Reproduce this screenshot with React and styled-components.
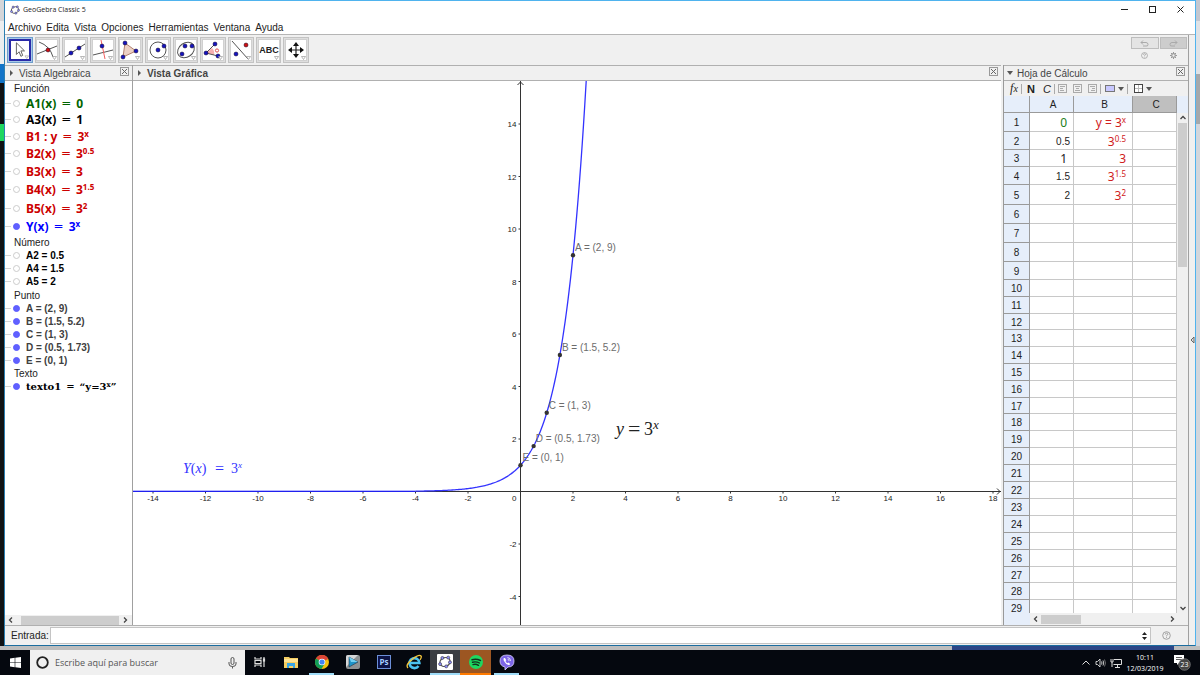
import React from "react";
import styled, { createGlobalStyle } from "styled-components";

const GlobalStyle = createGlobalStyle`
  * { box-sizing: border-box; }
  body {
    margin: 0;
    font-family: "Liberation Sans", Arial, sans-serif;
    font-size: 10px;
    color: #222;
  }
  button, input {
    font: inherit;
    color: inherit;
    margin: 0;
    padding: 0;
    border: 0;
    background: none;
  }
  svg { display: block; }
`;

// * Desktop

const Desktop = styled.div`
  display: flex;
  flex-direction: column;
  height: 100vh;
  overflow: hidden;
  background: #101214;
`;

const Stage = styled.div`
  flex: 1;
  min-height: 0;
  display: flex;
`;

const Edge = styled.div`
  width: 4px;
  flex: none;
  display: flex;
  flex-direction: column;
  background: ${props => props.color};
`;

const EdgePart = styled.div`
  height: ${props => props.size}px;
  background: ${props => props.color};
`;

const Window = styled.section`
  flex: 1;
  min-width: 0;
  display: flex;
  flex-direction: column;
  background: #f0f0f0;
  border: 1px solid #4fb3ee;
  border-left-color: #2b7fb2;
  border-bottom-color: #1b6d9f;
`;

const Shadow = styled.div`
  height: 4px;
  flex: none;
  display: flex;
  background: #bdbdbd;
`;

const ShadowBlue = styled.div`
  width: 222px;
  margin-left: auto;
  margin-right: 26px;
  background: #2c4687;
`;

const TitleBar = styled.header`
  height: 17px;
  flex: none;
  display: flex;
  align-items: center;
  gap: 3px;
  padding-left: 5px;
  background: white;
  font-family: "Open Sans", "Noto Sans", sans-serif;
  font-size: 7px;
`;

const WindowButtons = styled.div`
  margin-left: auto;
  padding-right: 1px;
  display: flex;
`;

const WindowButton = styled.button`
  width: 28px;
  height: 16px;
  display: grid;
  place-items: center;
`;

const MenuBar = styled.nav`
  height: 16px;
  flex: none;
  display: flex;
  align-items: center;
  gap: 5px;
  padding: 2px 0 0 3px;
  background: white;
`;

const WindowBody = styled.div`
  flex: 1;
  min-height: 0;
  display: flex;
  border-top: 1px solid #b5b5b5;
`;

const Main = styled.div`
  flex: 1;
  min-width: 0;
  display: flex;
  flex-direction: column;
`;

const SideStrip = styled.button`
  width: 7px;
  flex: none;
  display: flex;
  align-items: center;
  border-left: 1px solid #a0a0a0;
  background: #f0f0f0;
`;

// * Toolbar

const ToolBar = styled.div`
  height: 30px;
  flex: none;
  display: flex;
  justify-content: space-between;
  padding: 2px 1px 0 2px;
`;

const Tools = styled.div`
  width: 302px;
  height: 26px;
  display: flex;
  gap: 2px;
`;

const Tool = styled.button`
  flex: 1;
  display: grid;
  place-items: center;
  border: 1px solid ${props => (props.selected ? "#6d9dcc" : "#c3c3c3")};
  background: ${props => (props.selected ? "#a9c9e8" : "#dedede")};
`;

const ToolFace = styled.span`
  width: 22px;
  height: 22px;
  display: grid;
  place-items: center;
  background: white;
  border: ${props => (props.selected ? "2px solid #2a2aa8" : "1px solid #d0d0d0")};
`;

const Actions = styled.div`
  width: 56px;
  display: grid;
  grid-template-columns: 1fr 1fr;
  grid-template-rows: 12px 13px;
  column-gap: 1px;
`;

const Action = styled.button`
  display: grid;
  place-items: center;
  border: ${props => (props.boxed ? "1px solid #bdbdbd" : "0")};
  background: ${props => (props.boxed ? props.dark ? "#cdcdcd" : "#e4e4e4" : "none")};
`;

// * Panels

const Panels = styled.div`
  flex: 1;
  min-height: 0;
  display: flex;
`;

const Panel = styled.section`
  width: ${props => (props.width ? props.width + "px" : "auto")};
  flex: ${props => (props.width ? "none" : "1")};
  min-width: 0;
  display: flex;
  flex-direction: column;
  border-right: ${props => props.line || 0}px solid #a0a0a0;
  border-left: ${props => props.leftLine || 0}px solid #999;
  margin-right: ${props => props.gap || 0}px;
`;

const PanelHead = styled.div`
  height: 16px;
  flex: none;
  display: flex;
  align-items: center;
  gap: 4px;
  padding: 0 3px 0 ${props => props.inset || 5}px;
  border-top: 1px solid #b0b0b0;
  border-bottom: 1px solid #b0b0b0;
  color: #444;
`;

const PanelTitle = styled.h2`
  flex: 1;
  margin: 0;
  padding-top: 2px;
  font-size: 10px;
  line-height: 12px;
  font-weight: ${props => (props.strong ? "bold" : "normal")};
`;

const CloseButton = styled.button`
  width: 9px;
  height: 9px;
  margin-bottom: 3px;
`;

const Tree = styled.div`
  flex: 1;
  min-height: 0;
  overflow: hidden;
  background: white;
`;

const TreeGroup = styled.div`
  height: ${props => props.height}px;
  display: flex;
  align-items: center;
  padding-left: 9px;
`;

const TreeRow = styled.div`
  height: ${props => props.height}px;
  display: flex;
  align-items: center;
  font-weight: bold;
  color: ${props => props.color};
`;

const Branch = styled.span`
  width: 6px;
  margin-right: 2px;
  border-top: 1px solid #d4d4d4;
`;

const Marble = styled.button`
  width: 7px;
  height: 7px;
  margin-right: 6px;
  border-radius: 50%;
  border: 1px solid ${props => (props.on ? "#5c5cff" : "#ccc")};
  background: ${props => (props.on ? "#6060ff" : "white")};
`;

const Formula = styled.span`
  display: flex;
  gap: 5px;
  font-family: ${props =>
    props.serif ? `"DejaVu Serif", serif` : `"Noto Sans", sans-serif`};
  font-size: ${props => (props.serif ? 10 : 12)}px;
  line-height: 13px;
`;

const Equals = styled.span`
  font-family: "DejaVu Sans", sans-serif;
  font-weight: normal;
`;

const Sup = styled.sup`
  font-size: 8px;
  line-height: 0;
  vertical-align: 4px;
`;

const SmallSup = styled(Sup)`
  font-size: 7px;
  vertical-align: 3px;
`;

const ScrollRow = styled.div`
  height: ${props => props.height}px;
  flex: 1;
  display: flex;
  align-items: center;
  background: #f0f0f0;
`;

const ScrollFoot = styled.div`
  height: 10px;
  flex: none;
  display: flex;
  padding-right: 1px;
  background: #f0f0f0;
`;

const ArrowButton = styled.button`
  width: ${props => props.size}px;
  height: 10px;
  flex: none;
  display: grid;
  place-items: center;
`;

const Track = styled.div`
  flex: 1;
  height: 9px;
`;

const Thumb = styled.div`
  width: ${props => props.length};
  height: 9px;
  background: #cdcdcd;
`;

const Plot = styled.svg`
  flex: 1;
  width: 100%;
  min-height: 0;
  background: white;
  font-family: "Liberation Sans", Arial, sans-serif;
`;

// * Spreadsheet

const StyleBar = styled.div`
  height: 15px;
  flex: none;
  display: flex;
  align-items: center;
  padding-left: 3px;
`;

const StyleButton = styled.button`
  width: ${props => props.width}px;
  height: 14px;
  display: flex;
  align-items: center;
  justify-content: center;
  gap: ${props => (props.serif ? 0 : 3)}px;
  font-size: ${props => (props.serif ? 12 : 11)}px;
  font-weight: ${props => (props.strong ? "bold" : "normal")};
  font-style: ${props => (props.slanted ? "italic" : "normal")};
  font-family: ${props => (props.serif ? `"Liberation Serif", serif` : "inherit")};
`;

const Divider = styled.span`
  width: 1px;
  height: 10px;
  background: #aaa;
`;

const SheetArea = styled.div`
  flex: 1;
  min-height: 0;
  display: flex;
`;

const SheetView = styled.div`
  flex: 1;
  min-width: 0;
  overflow: hidden;
  background: white;
`;

const Sheet = styled.table`
  width: 100%;
  table-layout: fixed;
  border-collapse: separate;
  border-spacing: 0;
`;

const HeadCell = styled.th`
  height: ${props => props.height}px;
  width: ${props => (props.width ? props.width + "px" : "auto")};
  padding: 2px 0 0 ${props => (props.letter ? 3 : 0)}px;
  border-right: 1px solid #9a9a9a;
  border-bottom: 1px solid #9a9a9a;
  background: ${props => (props.current ? "#bfbfbf" : "#e6eefa")};
  font-size: 10px;
  font-weight: normal;
  line-height: 12px;
`;

const Cell = styled.td`
  padding: 2px ${props => (props.math ? 6 : 3)}px 0 0;
  border-right: 1px solid #c8c8c8;
  border-bottom: 1px solid #c8c8c8;
  text-align: right;
  line-height: 12px;
  white-space: nowrap;
  font-size: ${props => (props.math ? 12 : 10)}px;
  font-family: ${props => (props.math ? `"Noto Sans", sans-serif` : "inherit")};
  color: ${props => props.color || "#222"};
`;

const SheetScroll = styled.div`
  width: 11px;
  flex: none;
  display: flex;
  flex-direction: column;
  align-items: center;
`;

const ScrollHead = styled.div`
  width: 100%;
  height: 17px;
  background: #e6eefa;
`;

const VerticalTrack = styled.div`
  flex: 1;
  width: 9px;
`;

const VerticalThumb = styled.div`
  height: 30%;
  background: #cdcdcd;
`;

const SheetFoot = styled.div`
  height: 12px;
  flex: none;
  display: flex;
  padding-right: 11px;
  background: #f0f0f0;
`;

const SheetCorner = styled.div`
  width: 26px;
  background: #e6eefa;
`;

// * Input bar

const InputBar = styled.form`
  height: 20px;
  flex: none;
  display: flex;
  align-items: center;
  gap: 1px;
  padding-left: 6px;
  border-top: 1px solid #b0b0b0;
`;

const InputFrame = styled.div`
  flex: 1;
  height: 17px;
  display: flex;
  align-items: center;
  padding-right: 3px;
  border: 1px solid #c4c4c4;
  background: white;
`;

const TextInput = styled.input`
  flex: 1;
  min-width: 0;
  height: 15px;
  padding: 0 3px;
  outline: none;
`;

const HelpButton = styled.button`
  width: 36px;
  padding-right: 8px;
  display: grid;
  place-items: center;
`;

// * Taskbar

const TaskBar = styled.footer`
  height: 25px;
  flex: none;
  display: flex;
  background: #05080f;
  color: white;
  font-family: "Open Sans", "Noto Sans", sans-serif;
`;

const StartButton = styled.button`
  width: 30px;
  display: grid;
  place-items: center;
`;

const SearchBox = styled.label`
  width: 215px;
  display: flex;
  align-items: center;
  gap: 6px;
  padding: 0 8px 0 6px;
  background: #f0f0f0;
`;

const SearchInput = styled.input`
  flex: 1;
  min-width: 0;
  color: #444;
  font-size: 9px;
  font-family: "Open Sans", "Noto Sans", sans-serif;
  &::placeholder { color: #555; opacity: 1; }
`;

const Apps = styled.div`
  width: 277px;
  display: flex;
`;

const AppButton = styled.button`
  flex: 1;
  display: flex;
  flex-direction: column;
  align-items: center;
  justify-content: space-between;
  padding-top: 4px;
  background: ${props => props.tint || "none"};
`;

const AppLine = styled.span`
  width: ${props => (props.wide ? "100%" : "25px")};
  height: 2px;
  background: ${props => props.color || "transparent"};
`;

const Tray = styled.div`
  margin-left: auto;
  display: flex;
  align-items: center;
  padding-right: 9px;
`;

const TrayButton = styled.button`
  width: 15px;
  display: grid;
  place-items: center;
`;

const Clock = styled.time`
  width: 44px;
  text-align: center;
  font-size: 7px;
  line-height: 11px;
`;

const Notices = styled.button`
  width: 24px;
  display: grid;
  place-items: center end;
`;

const Close = ({ name }) => (
  <CloseButton aria-label={name}>
    <svg width="9" height="9" fill="none" stroke="#999">
      <rect x="0.5" y="0.5" width="8" height="8" />
      <path d="M2 2l5 5M7 2l-5 5" stroke="#666" />
    </svg>
  </CloseButton>
);

const Triangle = ({ down }) => (
  <svg width="6" height="6" fill="#555">
    <path d={down ? "M0 1h6l-3 4z" : "M1 0v6l3-3z"} />
  </svg>
);

const chevrons = {
  left: "M4 0.5L1.5 3 4 5.5",
  right: "M2 0.5L4.5 3 2 5.5",
  up: "M0.5 4L3 1.5 5.5 4",
  down: "M0.5 2L3 4.5 5.5 2"
};

const Arrow = ({ to, size = 16 }) => (
  <ArrowButton size={size} aria-label={to}>
    <svg width="6" height="6" fill="none" stroke="#444" strokeWidth="1.3">
      <path d={chevrons[to]} />
    </svg>
  </ArrowButton>
);

const GeoLogo = ({ size }) => (
  <svg width={size} height={size} viewBox="0 0 16 16">
    <ellipse cx="8" cy="8" rx="6" ry="5" transform="rotate(-20 8 8)" fill="none" stroke="#555" strokeWidth="1.3" />
    <g fill="#8f8fff" stroke="#445" strokeWidth="0.8">
      <circle cx="5" cy="3.4" r="1.7" />
      <circle cx="11.7" cy="3" r="1.7" />
      <circle cx="13.7" cy="8.4" r="1.7" />
      <circle cx="9.4" cy="13" r="1.7" />
      <circle cx="2.4" cy="10.4" r="1.7" />
    </g>
  </svg>
);

const Dot = ({ x, y, red }) => (
  <circle cx={x} cy={y} r="2" fill={red ? "#d01010" : "#1414c0"} stroke="#102" strokeWidth="0.5" />
);

const tools = [
  {
    name: "Elige y mueve",
    art: <path d="M6 2v13l3-3 2 5 2-1-2-5h4z" fill="white" stroke="#555" />
  },
  {
    name: "Punto",
    art: (
      <>
        <path d="M2 2q11 4 14 15M0 14L20 6" stroke="#555" fill="none" />
        <Dot x="11" y="10" red />
      </>
    )
  },
  {
    name: "Recta",
    art: (
      <>
        <path d="M0 17L20 4" stroke="#555" />
        <Dot x="6" y="13" />
        <Dot x="14" y="8" />
      </>
    )
  },
  {
    name: "Perpendicular",
    art: (
      <>
        <path d="M0 15l20-5" stroke="#555" />
        <path d="M8 0l4 19" stroke="#f06060" />
        <Dot x="9" y="6" />
      </>
    )
  },
  {
    name: "Polígono",
    art: (
      <>
        <path d="M5 3l11 8L3 17z" fill="#ecd0c4" stroke="#b08070" />
        <Dot x="5" y="3" />
        <Dot x="16" y="11" />
        <Dot x="3" y="17" />
      </>
    )
  },
  {
    name: "Circunferencia",
    art: (
      <>
        <circle cx="10" cy="10" r="8" fill="none" stroke="#555" />
        <Dot x="10" y="10" />
        <Dot x="16" y="6" />
      </>
    )
  },
  {
    name: "Elipse",
    art: (
      <>
        <ellipse cx="10" cy="10" rx="9" ry="7" transform="rotate(-35 10 10)" fill="none" stroke="#555" />
        <Dot x="9" y="6" />
        <Dot x="16" y="6" />
        <Dot x="6" y="14" />
      </>
    )
  },
  {
    name: "Ángulo",
    art: (
      <>
        <path d="M3 13L9 8q3 3 2 7z" fill="#f7b0b0" />
        <path d="M3 13L12 4M3 13l12 3" stroke="#555" />
        <circle cx="14" cy="10.5" r="1.6" fill="none" stroke="#e05050" />
        <Dot x="3" y="13" />
        <Dot x="12" y="4" />
        <Dot x="15" y="16" />
      </>
    )
  },
  {
    name: "Simetría",
    art: (
      <>
        <path d="M1 1l16 18" stroke="#555" />
        <Dot x="15" y="5" red />
        <Dot x="5" y="14" />
      </>
    )
  },
  {
    name: "Texto",
    art: (
      <text x="10" y="13" textAnchor="middle" fontSize="9" fontWeight="bold" fill="#222">
        ABC
      </text>
    )
  },
  {
    name: "Desplaza vista",
    art: (
      <>
        <path d="M10 4v12M4 10h12" stroke="#222" strokeWidth="1.2" />
        <path d="M10 2l3 4H7zM10 18l3-4H7zM2 10l4-3v6zM18 10l-4-3v6z" fill="#111" />
      </>
    )
  }
];

const menus = ["Archivo", "Edita", "Vista", "Opciones", "Herramientas", "Ventana", "Ayuda"];

const green = "#006400";
const red = "#cc0000";
const blue = "#0000ff";

const algebra = [
  { group: "Función", height: 15 },
  { left: "A1(x)", right: "0", color: green, height: 15 },
  { left: "A3(x)", right: "1", color: "#000", height: 17 },
  { left: "B1 : y", right: "3", sup: "x", color: red, height: 16 },
  { left: "B2(x)", right: "3", sup: "0.5", color: red, height: 19 },
  { left: "B3(x)", right: "3", color: red, height: 17 },
  { left: "B4(x)", right: "3", sup: "1.5", color: red, height: 19 },
  { left: "B5(x)", right: "3", sup: "2", color: red, height: 18 },
  { left: "Y(x)", right: "3", sup: "x", color: blue, height: 18, on: true },
  { group: "Número", height: 14 },
  { text: "A2 = 0.5", color: "#000", height: 13 },
  { text: "A4 = 1.5", color: "#000", height: 13 },
  { text: "A5 = 2", color: "#000", height: 13 },
  { group: "Punto", height: 14 },
  { text: "A = (2, 9)", color: "#404040", height: 13, on: true },
  { text: "B = (1.5, 5.2)", color: "#404040", height: 13, on: true },
  { text: "C = (1, 3)", color: "#404040", height: 13, on: true },
  { text: "D = (0.5, 1.73)", color: "#404040", height: 13, on: true },
  { text: "E = (0, 1)", color: "#404040", height: 13, on: true },
  { group: "Texto", height: 13 },
  { left: "texto1", right: "“y=3", smallSup: "x", end: "”", color: "#000", height: 13, on: true, serif: true }
];

const AlgebraRow = ({ item }) => {
  if (item.group) {
    return <TreeGroup height={item.height}>{item.group}</TreeGroup>;
  }
  return (
    <TreeRow height={item.height} color={item.color}>
      <Branch />
      <Marble on={item.on} aria-label={item.text || item.left} />
      {item.text || (
        <Formula serif={item.serif}>
          <span>{item.left}</span>
          <Equals>=</Equals>
          <span>
            {item.right}
            {item.sup && <Sup>{item.sup}</Sup>}
            {item.smallSup && <SmallSup>{item.smallSup}</SmallSup>}
            {item.end}
          </span>
        </Formula>
      )}
    </TreeRow>
  );
};

// * Graph: origin and unit length in pixels
const OX = 387.5;
const OY = 410.5;
const UX = 26.25;
const UY = 26.25;

const px = x => OX + x * UX;
const py = y => OY - y * UY;

// * from x = -4 on; left of that the curve lies on the axis
const curve = Array.from({ length: 135 }, (_, i) => {
  const x = -4 + i * 0.05;
  return `${px(x).toFixed(2)} ${py(3 ** x).toFixed(2)}`;
}).join("L");

const xTicks = [-14, -12, -10, -8, -6, -4, -2, 2, 4, 6, 8, 10, 12, 14, 16, 18];
const yTicks = [-4, -2, 2, 4, 6, 8, 10, 12, 14];

const points = [
  { x: 2, y: 9, label: "A = (2, 9)" },
  { x: 1.5, y: 5.2, label: "B = (1.5, 5.2)" },
  { x: 1, y: 3, label: "C = (1, 3)" },
  { x: 0.5, y: 1.73, label: "D = (0.5, 1.73)" },
  { x: 0, y: 1, label: "E = (0, 1)" }
];

const Graph = () => (
  <Plot role="img" aria-label="Vista Gráfica">
    <g stroke="#333" strokeWidth="1">
      <line x1={px(-4)} x2="100%" y1={OY} y2={OY} />
      <line x1={OX} x2={OX} y1="0" y2="100%" />
      {xTicks.map(t => (
        <line key={t} x1={px(t)} x2={px(t)} y1={OY} y2={OY + 2} />
      ))}
      {yTicks.map(t => (
        <line key={t} x1={OX - 2} x2={OX} y1={py(t)} y2={py(t)} />
      ))}
      <path d={`M${OX - 3} 4L${OX} 1l3 3M864 ${OY - 3}l3 3l-3 3`} fill="none" />
    </g>
    <g fontSize="8" fill="#222">
      {xTicks.map(t => (
        <text key={t} x={px(t)} y={OY + 9} textAnchor="middle">{t}</text>
      ))}
      {yTicks.map(t => (
        <text key={t} x={OX - 4} y={py(t) + 3} textAnchor="end">{t}</text>
      ))}
      <text x={OX - 4} y={OY + 9} textAnchor="end">0</text>
    </g>
    <rect x="0" y={OY - 0.5} width={px(-4)} height="1" fill="#2020ee" />
    <rect x="0" y={OY - 1.5} width={px(-4)} height="1" fill="#b8b8ff" />
    <path d={`M${curve}`} fill="none" stroke="#3333ff" strokeWidth="1.3" />
    {points.map(p => (
      <g key={p.label}>
        <text x={px(p.x) + 2} y={py(p.y) - 4} fontSize="10" fill="#6c6c6c">{p.label}</text>
        <circle cx={px(p.x)} cy={py(p.y)} r="2.2" fill="#333" />
      </g>
    ))}
    <g fontFamily="Liberation Serif, serif" fill="#222" fontSize="18">
      <text x="483" y="354" fontStyle="italic">y</text>
      <text x="495" y="355" fontSize="22">=</text>
      <text x="511" y="354">3</text>
      <text x="520" y="348" fontSize="13" fontStyle="italic">x</text>
    </g>
    <g fontFamily="Liberation Serif, serif" fill="#3333ff" fontSize="14">
      <text x="50" y="392"><tspan fontStyle="italic">Y</tspan>(<tspan fontStyle="italic">x</tspan>)</text>
      <text x="82" y="393" fontSize="16">=</text>
      <text x="98" y="392">3</text>
      <text x="105" y="387" fontSize="9" fontStyle="italic">x</text>
    </g>
  </Plot>
);

const cells = {
  1: [{ v: "0", color: "#208020", math: true }, { v: "y = 3", sup: "x" }],
  2: [{ v: "0.5" }, { v: "3", sup: "0.5" }],
  3: [{ v: "1", math: true }, { v: "3" }],
  4: [{ v: "1.5" }, { v: "3", sup: "1.5" }],
  5: [{ v: "2" }, { v: "3", sup: "2" }]
};

const rowHeights = [
  19, 18, 17, 18, 20, 19, 19, 19, 18,
  17, 17, 16, 17, 17, 17, 17, 16, 17, 17, 17, 17, 17, 17, 17, 17, 17, 16, 17, 17
];

const SheetTable = () => (
  <Sheet>
    <thead>
      <tr>
        <HeadCell height={17} width={26} aria-label="Fila" />
        <HeadCell width={44} letter scope="col">A</HeadCell>
        <HeadCell width={59} letter scope="col">B</HeadCell>
        <HeadCell letter current scope="col">C</HeadCell>
      </tr>
    </thead>
    <tbody>
      {rowHeights.map((height, i) => {
        const [a, b] = cells[i + 1] || [{}, {}];
        return (
          <tr key={i}>
            <HeadCell height={height} scope="row">{i + 1}</HeadCell>
            <Cell color={a.color} math={a.math}>{a.v}</Cell>
            <Cell color="#d02020" math>
              {b.v}
              {b.sup && <Sup>{b.sup}</Sup>}
            </Cell>
            <Cell />
          </tr>
        );
      })}
    </tbody>
  </Sheet>
);

const alignments = [
  { name: "Izquierda", lines: "M2 2.5h5M2 4.5h3M2 6.5h4" },
  { name: "Centro", lines: "M2 2.5h5M3 4.5h3M2 6.5h5" },
  { name: "Derecha", lines: "M2 2.5h5M4 4.5h3M3 6.5h4" }
];

const SheetStyleBar = () => (
  <StyleBar>
    <StyleButton width={14} serif slanted>f<small>x</small></StyleButton>
    <Divider />
    <StyleButton width={18} strong>N</StyleButton>
    <StyleButton width={14} slanted>C</StyleButton>
    <Divider />
    {alignments.map(a => (
      <StyleButton key={a.name} width={15} aria-label={a.name}>
        <svg width="9" height="9" fill="none" stroke="#aaa">
          <rect x="0.5" y="0.5" width="8" height="8" />
          <path d={a.lines} />
        </svg>
      </StyleButton>
    ))}
    <Divider />
    <StyleButton width={26} aria-label="Color de fondo">
      <svg width="10" height="7"><rect x="0.5" y="0.5" width="9" height="6" fill="#c8c8ff" stroke="#777" /></svg>
      <Triangle down />
    </StyleButton>
    <Divider />
    <StyleButton width={29} aria-label="Bordes">
      <svg width="9" height="9" fill="white" stroke="#444">
        <rect x="0.5" y="0.5" width="8" height="8" />
        <path d="M4.5 1v7M1 4.5h7" stroke="#bbb" />
      </svg>
      <Triangle down />
    </StyleButton>
  </StyleBar>
);

const HelpIcon = ({ size = 9 }) => (
  <svg width={size} height={size} viewBox="0 0 9 9" fill="none" stroke="#999">
    <circle cx="4.5" cy="4.5" r="3.8" strokeWidth="0.9" />
    <path d="M3.2 3.5q0-1.3 1.3-1.3t1.3 1.1q0 .8-1.3 1.4v.6M4.5 6.2v.8" strokeWidth="0.9" />
  </svg>
);

const light = "#9fdcf8";

const apps = [
  {
    name: "Vista de tareas",
    art: (
      <g fill="none" stroke="#ddd" strokeWidth="1.2">
        <path d="M3 3v2h6V3M3 13v-2h6v2M3 6.5h6v3H3z" />
        <path d="M12 3v10" />
        <path d="M11.5 5h1v2h-1z" fill="#ddd" />
      </g>
    )
  },
  {
    name: "Explorador",
    art: (
      <>
        <path d="M1 3h5l1 1h8v10H1z" fill="#f5ce62" />
        <path d="M1 5h14v3H1z" fill="#ffe394" />
        <path d="M4 14V9h8v5h-2v-2H6v2z" fill="#39a5e6" />
      </>
    )
  },
  {
    name: "Chrome",
    line: light,
    art: (
      <>
        <circle cx="8" cy="8" r="7" fill="#f4c20d" />
        <path d="M8 8L2 4.5A7 7 0 0 1 14.3 5z" fill="#db4437" />
        <path d="M8 8l-6-3.6A7 7 0 0 0 7.5 15L11 9z" fill="#0f9d58" />
        <circle cx="8" cy="8" r="3.3" fill="#fff" />
        <circle cx="8" cy="8" r="2.6" fill="#4285f4" />
      </>
    )
  },
  {
    name: "Reproductor",
    art: (
      <>
        <rect x="1" y="1" width="14" height="14" rx="2" fill="#8e9294" />
        <path d="M1 13L13 1H3Q1 1 1 3z" fill="#d5d7d8" />
        <path d="M4 3l9 5-9 5z" fill="#1e93c8" stroke="#234" strokeWidth="0.6" />
        <path d="M4 3l9 5H6z" fill="#72cff2" />
      </>
    )
  },
  {
    name: "Photoshop",
    art: (
      <>
        <rect x="1.5" y="1.5" width="13" height="13" fill="#0c1345" stroke="#6c8fd8" />
        <text x="8" y="11" textAnchor="middle" fontSize="8" fontWeight="bold" fill="#a5cfff">Ps</text>
      </>
    )
  },
  {
    name: "Internet Explorer",
    art: (
      <g fill="none">
        <path d="M4 9h9.4A5 5 0 1 0 12.5 12" stroke="#4cc3f0" strokeWidth="2.6" />
        <path d="M2 14Q-1 11 6 5.5T15 2q1 1-1 4" stroke="#f5c63c" strokeWidth="1.3" />
      </g>
    )
  },
  {
    name: "GeoGebra",
    line: light,
    wide: true,
    tint: "#3a3d43",
    art: (
      <>
        <rect width="16" height="16" rx="1" fill="white" />
        <g transform="translate(1 1)"><GeoLogo size={14} /></g>
      </>
    )
  },
  {
    name: "Spotify",
    line: "#ff7a00",
    wide: true,
    tint: "#9c5622",
    art: (
      <>
        <circle cx="8" cy="8" r="7" fill="#1ed760" />
        <path
          d="M4 5.7q4.5-1.2 8.5.8M4.5 8.2q3.7-1 7 .8M5 10.6q3-.8 5.5.7"
          fill="none" stroke="#12331e" strokeWidth="1.4" strokeLinecap="round"
        />
      </>
    )
  },
  {
    name: "Viber",
    line: light,
    art: (
      <>
        <path d="M8 1q7 0 7 6t-6 6l-3 3v-3q-5-1-5-6 0-6 7-6z" fill="#7d66e8" stroke="#d9d2ff" strokeWidth="0.8" />
        <path d="M5 4q-1 1 0 3 1.5 3 4.5 4 1 .3 1.8-1l-2-1.5-1 .8Q7 8.5 6.5 7l.8-.8L6 4z" fill="white" />
        <path d="M8.5 3.5q3 .3 3 3.5M8.7 5.3q1.3.2 1.3 1.5" stroke="white" fill="none" strokeWidth="0.8" />
      </>
    )
  }
];

const Taskbar = () => (
  <TaskBar>
    <StartButton aria-label="Inicio">
      <svg width="11" height="11" viewBox="0 0 11 11" fill="white">
        <path d="M0 1.5l4.7-.7v4.4H0zM5.3.7L11 0v5.2H5.3zM0 5.8h4.7v4.4L0 9.5zM5.3 5.8H11V11l-5.7-.8z" />
      </svg>
    </StartButton>
    <SearchBox>
      <svg width="13" height="13"><circle cx="6.5" cy="6.5" r="5.3" fill="none" stroke="#222" strokeWidth="1.8" /></svg>
      <SearchInput type="text" placeholder="Escribe aquí para buscar" aria-label="Buscar" />
      <svg width="9" height="12" fill="none" stroke="#555">
        <rect x="3" y="0.5" width="3" height="7" rx="1.5" />
        <path d="M1 5v2q0 2.5 3.5 2.5T8 7V5M4.5 9.5v2" />
      </svg>
    </SearchBox>
    <Apps>
      {apps.map(app => (
        <AppButton key={app.name} tint={app.tint} aria-label={app.name}>
          <svg width="16" height="16" viewBox="0 0 16 16">{app.art}</svg>
          <AppLine color={app.line} wide={app.wide} />
        </AppButton>
      ))}
    </Apps>
    <Tray>
      <TrayButton aria-label="Iconos ocultos">
        <svg width="8" height="5" fill="none" stroke="#ddd"><path d="M0.5 4.5L4 1l3.5 3.5" /></svg>
      </TrayButton>
      <TrayButton aria-label="Volumen">
        <svg width="11" height="10" fill="none" stroke="#ddd" strokeWidth="0.9">
          <path d="M1 3.5h1.5L5 1v8L2.5 6.5H1zM6.5 3.5q1 1.5 0 3M8 2.5q1.5 2.5 0 5" />
          <path d="M9.5 1.5q2 3.5 0 7" stroke="#777" />
        </svg>
      </TrayButton>
      <TrayButton aria-label="Red">
        <svg width="12" height="10" fill="none" stroke="#ddd">
          <path d="M4 1.5h7.5v5H3.5M7.5 6.5v3M5 9.5h5M1 1v3h2V1M2 4v5" />
        </svg>
      </TrayButton>
      <Clock>
        10:11
        <br />
        12/03/2019
      </Clock>
      <Notices aria-label="Notificaciones">
        <svg width="18" height="17" viewBox="0 0 18 17">
          <path d="M1 1h10v8H6l-2 2V9H1z" fill="white" />
          <path d="M3 3.5h6M3 5.5h6" stroke="#333" strokeWidth="0.8" />
          <circle cx="11.5" cy="10.5" r="5.8" fill="#444" stroke="#999" strokeWidth="0.6" />
          <text x="11.5" y="13" textAnchor="middle" fontSize="7" fill="white">23</text>
        </svg>
      </Notices>
    </Tray>
  </TaskBar>
);

export default () => (
  <>
    <GlobalStyle />
    <Desktop>
      <Stage>
        <Edge color="#101214">
          <EdgePart size={21} color="#d4d6d9" />
          <EdgePart size={43} color="#eceeef" />
          <EdgePart size={19} color="#1274c8" />
          <EdgePart size={41} color="#101214" />
          <EdgePart size={17} color="#1ed760" />
        </Edge>
        <Window>
          <TitleBar>
            <GeoLogo size={10} />
            GeoGebra Classic 5
            <WindowButtons>
              <WindowButton aria-label="Minimizar">
                <svg width="7" height="7"><path d="M0 3.5h7" stroke="#222" /></svg>
              </WindowButton>
              <WindowButton aria-label="Maximizar">
                <svg width="7" height="7"><rect x="0.5" y="0.5" width="6" height="6" fill="none" stroke="#222" /></svg>
              </WindowButton>
              <WindowButton aria-label="Cerrar">
                <svg width="7" height="7"><path d="M0.5 0.5l6 6M6.5 0.5l-6 6" stroke="#222" /></svg>
              </WindowButton>
            </WindowButtons>
          </TitleBar>
          <MenuBar>
            {menus.map(menu => <button key={menu}>{menu}</button>)}
          </MenuBar>
          <WindowBody>
            <Main>
              <ToolBar>
                <Tools>
                  {tools.map((tool, i) => (
                    <Tool key={tool.name} selected={i === 0} aria-label={tool.name}>
                      <ToolFace selected={i === 0}>
                        <svg width={i === 0 ? 18 : 20} height={i === 0 ? 18 : 20} viewBox="0 0 20 20">
                          {tool.art}
                          <path d="M15.5 16.5h4l-2 3z" fill="white" stroke="#999" strokeWidth="0.7" />
                        </svg>
                      </ToolFace>
                    </Tool>
                  ))}
                </Tools>
                <Actions>
                  <Action boxed aria-label="Deshacer">
                    <svg width="9" height="7" fill="none" stroke="#aaa"><path d="M3 0.5L1 2.5l2 2M1 2.5h5q2 0 2 2t-2 1.5H3" /></svg>
                  </Action>
                  <Action boxed dark aria-label="Rehacer">
                    <svg width="9" height="7" fill="none" stroke="#aaa"><path d="M6 0.5l2 2-2 2M8 2.5H3q-2 0-2 2t2 1.5h3" /></svg>
                  </Action>
                  <Action aria-label="Ayuda"><HelpIcon size={7} /></Action>
                  <Action aria-label="Preferencias">
                    <svg width="7" height="7" fill="none" stroke="#999">
                      <circle cx="3.5" cy="3.5" r="1.8" strokeWidth="1.2" />
                      <path d="M3.5 0v1.5M3.5 5.5V7M0 3.5h1.5M5.5 3.5H7M1 1l1 1M5 5l1 1M6 1L5 2M2 5L1 6" />
                    </svg>
                  </Action>
                </Actions>
              </ToolBar>
              <Panels>
                <Panel width={128} line={1}>
                  <PanelHead inset={4}>
                    <Triangle />
                    <PanelTitle>Vista Algebraica</PanelTitle>
                    <Close name="Cerrar Vista Algebraica" />
                  </PanelHead>
                  <Tree>
                    {algebra.map((item, i) => <AlgebraRow key={i} item={item} />)}
                  </Tree>
                  <ScrollFoot>
                    <ScrollRow height={10}>
                      <Arrow to="left" size={12} />
                      <Track />
                      <Thumb length="98px" />
                      <Arrow to="right" size={12} />
                    </ScrollRow>
                  </ScrollFoot>
                </Panel>
                <Panel gap={2}>
                  <PanelHead inset={4}>
                    <Triangle />
                    <PanelTitle strong>Vista Gráfica</PanelTitle>
                    <Close name="Cerrar Vista Gráfica" />
                  </PanelHead>
                  <Graph />
                </Panel>
                <Panel width={185} leftLine={1}>
                  <PanelHead inset={3}>
                    <Triangle down />
                    <PanelTitle>Hoja de Cálculo</PanelTitle>
                    <Close name="Cerrar Hoja de Cálculo" />
                  </PanelHead>
                  <SheetStyleBar />
                  <SheetArea>
                    <SheetView><SheetTable /></SheetView>
                    <SheetScroll>
                      <ScrollHead />
                      <Arrow to="up" size={11} />
                      <VerticalTrack><VerticalThumb /></VerticalTrack>
                      <Arrow to="down" size={11} />
                    </SheetScroll>
                  </SheetArea>
                  <SheetFoot>
                    <SheetCorner />
                    <ScrollRow height={12}>
                      <Arrow to="left" size={11} />
                      <Track><Thumb length="40px" /></Track>
                      <Arrow to="right" size={11} />
                    </ScrollRow>
                  </SheetFoot>
                </Panel>
              </Panels>
              <InputBar>
                <label htmlFor="entrada">Entrada:</label>
                <InputFrame>
                  <TextInput id="entrada" type="text" />
                  <svg width="5" height="8" fill="#222"><path d="M0 3l2.5-3L5 3zM0 5l2.5 3L5 5z" /></svg>
                </InputFrame>
                <HelpButton type="button" aria-label="Ayuda de entrada"><HelpIcon /></HelpButton>
              </InputBar>
            </Main>
            <SideStrip aria-label="Mostrar panel lateral">
              <svg width="6" height="8" fill="#ddd" stroke="#666"><path d="M5 1v6L2 4z" /></svg>
            </SideStrip>
          </WindowBody>
        </Window>
        <Edge color="#d2d6dc">
          <EdgePart size={21} color="#c3c7d0" />
          <EdgePart size={53} color="#dfe2e6" />
          <EdgePart size={50} color="#a5a8ab" />
        </Edge>
      </Stage>
      <Shadow><ShadowBlue /></Shadow>
      <Taskbar />
    </Desktop>
  </>
);
